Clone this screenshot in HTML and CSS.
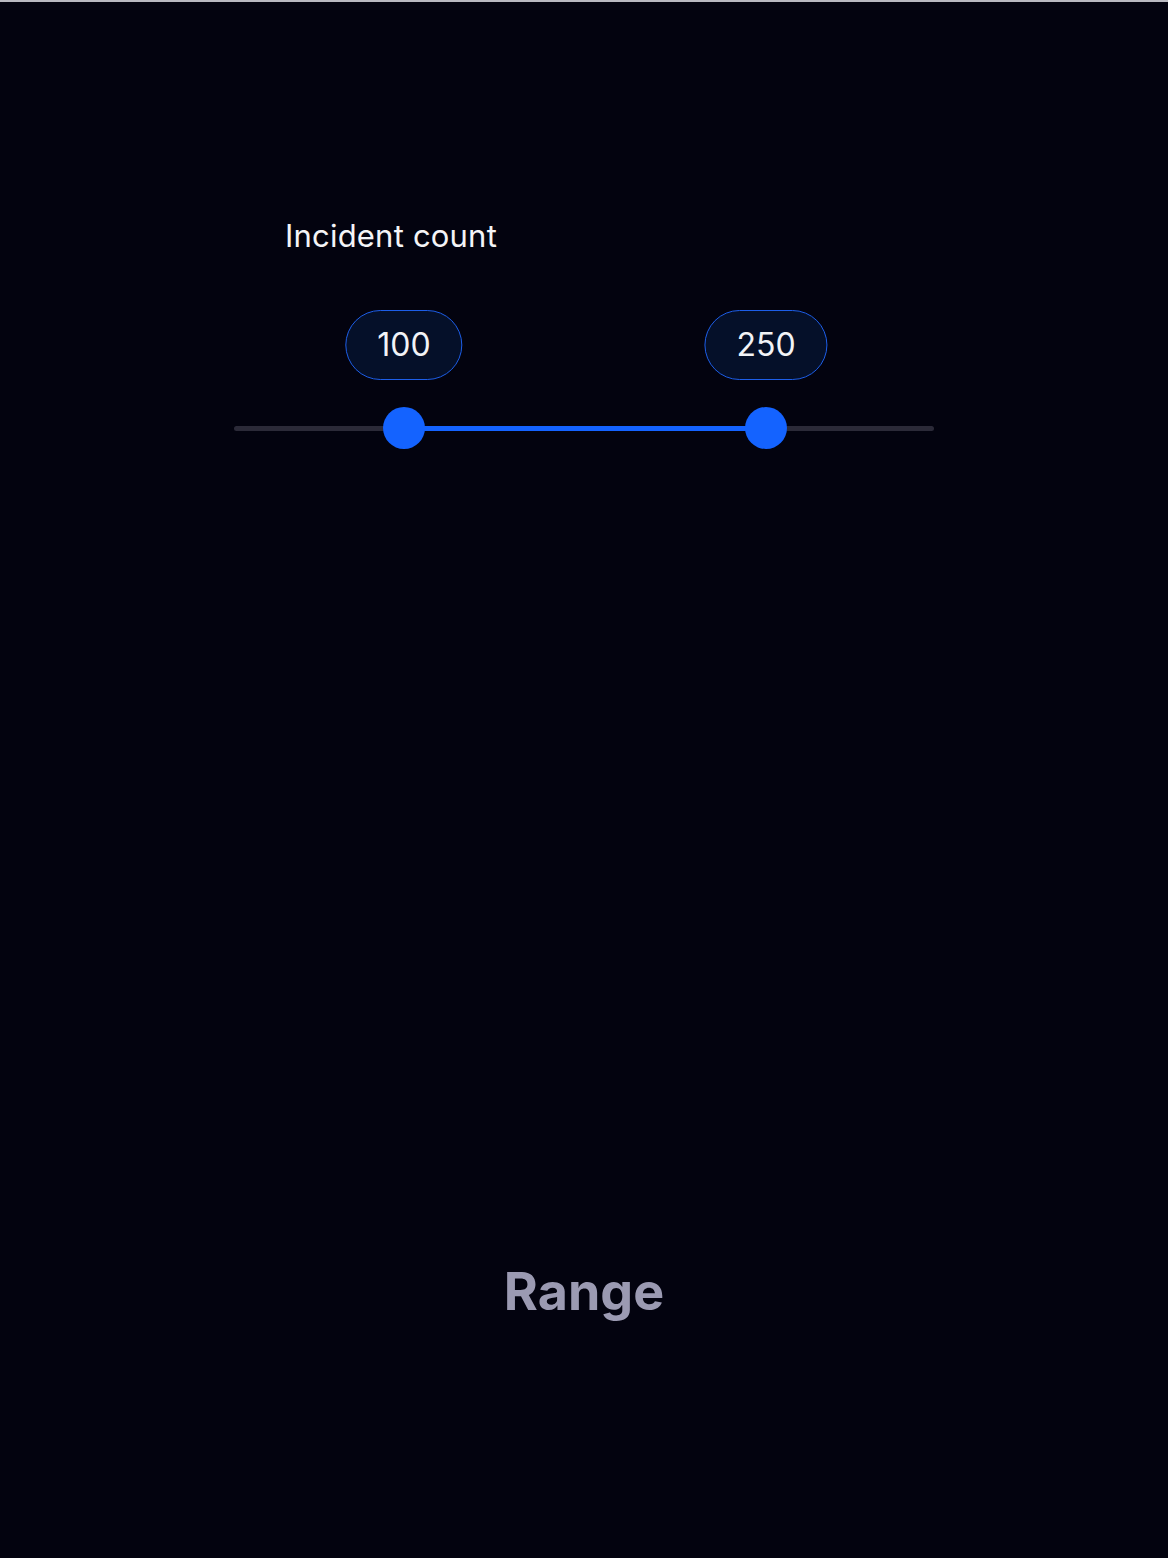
FILE: index.html
```html
<!DOCTYPE html>
<html>
<head>
<meta charset="utf-8">
<link rel="stylesheet" href="styles.css">
</head>
<body>
<div class="topline"></div>
<main class="stage">
  <section class="field">
    <div class="label">Incident count</div>
    <div class="slider">
      <div class="track"></div>
      <div class="fill" style="left:170px;width:361px"></div>
      <div class="handle" style="left:170px">
        <div class="bubble">100</div>
        <div class="thumb"></div>
      </div>
      <div class="handle" style="left:532px">
        <div class="bubble">250</div>
        <div class="thumb"></div>
      </div>
    </div>
  </section>
  <h1 class="title">Range</h1>
</main>
</body>
</html>
```
FILE: styles.css
```css
html, body {
  margin: 0;
  padding: 0;
  background: #03030f;
  height: 100%;
}
body {
  font-family: Inter, "Noto Sans", sans-serif;
  color: #f2f2f5;
}
.topline {
  height: 2px;
  background: #b9b9c0;
}
.stage {
  position: relative;
  height: 1556px;
}
.field {
  padding-top: 214px;
  margin-left: 234px;
  width: 700px;
}
.label {
  margin-left: 51px;
  font-size: 31px;
  line-height: 40px;
  font-weight: 400;
  letter-spacing: 0.2px;
  color: #f4f4f7;
}
.slider {
  position: relative;
  margin-top: 170px;
  height: 5px;
}
.track {
  position: absolute;
  inset: 0;
  background: #2b2a38;
  border-radius: 3px;
}
.fill {
  position: absolute;
  top: 0;
  height: 5px;
  background: #1463ff;
}
.handle {
  position: absolute;
  top: 2px;
  width: 0;
  height: 0;
}
.thumb {
  position: absolute;
  left: -21px;
  top: -21px;
  width: 42px;
  height: 42px;
  border-radius: 50%;
  background: #1463ff;
}
.bubble {
  position: absolute;
  top: -118px;
  left: 0;
  transform: translateX(-50%);
  height: 68px;
  padding: 0 31px;
  border: 1px solid #1d5ee8;
  border-radius: 36px;
  background: #051029;
  color: #f2f3f7;
  font-size: 32px;
  line-height: 68px;
  white-space: nowrap;
}
.title {
  position: absolute;
  left: 0;
  right: 0;
  top: 1256px;
  margin: 0;
  text-align: center;
  font-size: 52px;
  line-height: 68px;
  font-weight: 700;
  color: #9b9ab2;
}
```
